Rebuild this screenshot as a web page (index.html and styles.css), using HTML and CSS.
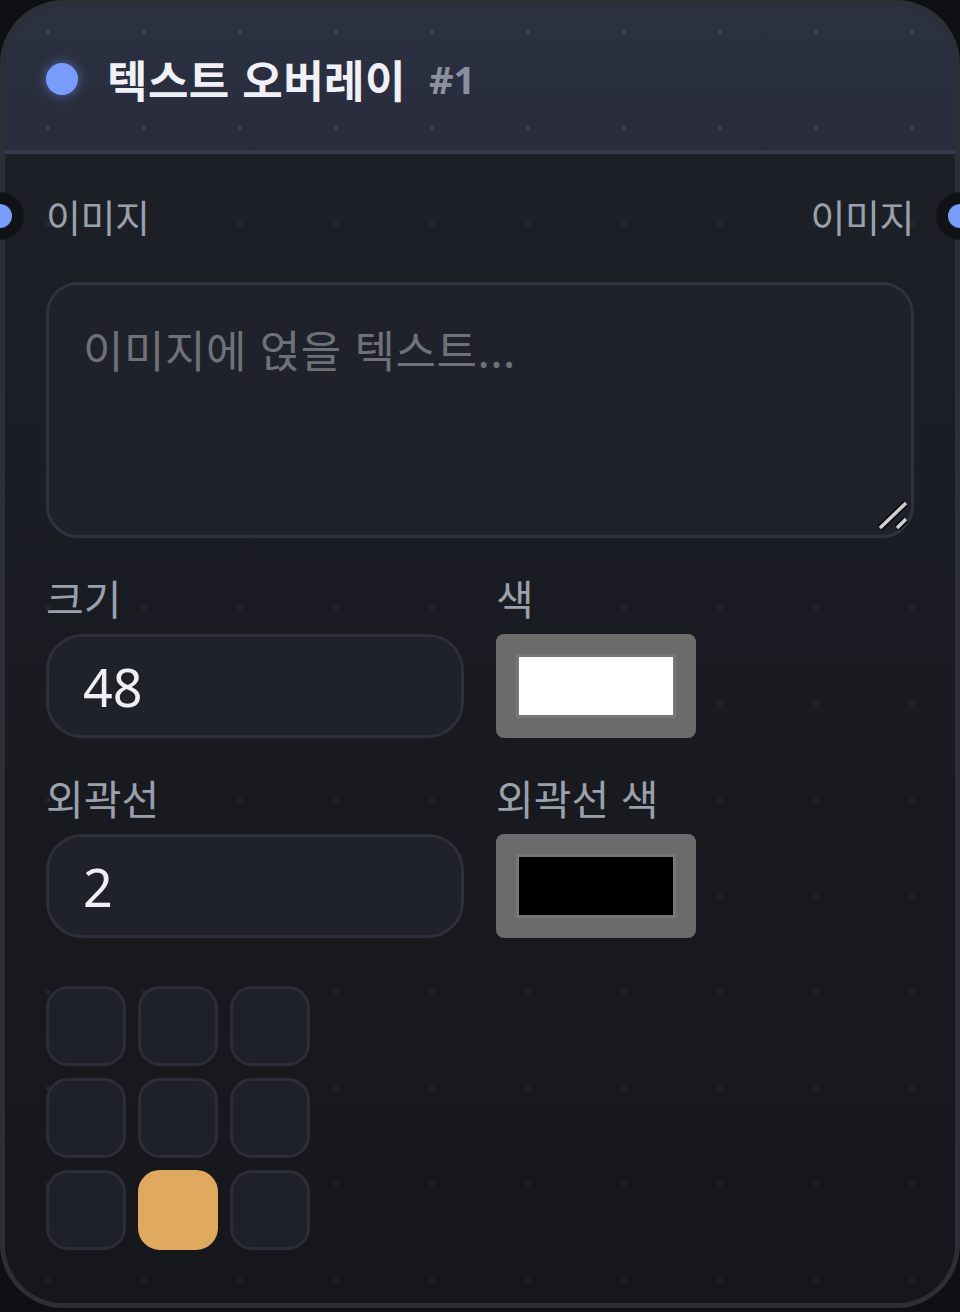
FILE: index.html
```html
<!DOCTYPE html>
<html lang="ko">
<head>
<meta charset="utf-8">
<title>텍스트 오버레이</title>
<link rel="stylesheet" href="styles.css">
</head>
<body>
<div class="node">
  <div class="node-header">
    <span class="status-dot"></span>
    <span class="title">텍스트 오버레이</span>
    <span class="node-id">#1</span>
  </div>
  <div class="node-body">
    <div class="ports">
      <span class="port port-in"><span class="handle handle-left"></span>이미지</span>
      <span class="port port-out">이미지<span class="handle handle-right"></span></span>
    </div>
    <div class="textarea-wrap">
      <textarea class="text-input" placeholder="이미지에 얹을 텍스트..."></textarea>
      <svg class="grip" width="34" height="34" viewBox="0 0 34 34">
        <g stroke-linecap="butt">
          <line x1="4" y1="30" x2="30" y2="5" stroke="#0b0b0d" stroke-width="7"/>
          <line x1="21" y1="30" x2="30" y2="21" stroke="#0b0b0d" stroke-width="7"/>
          <line x1="4" y1="30" x2="30" y2="5" stroke="#cfcfd2" stroke-width="3.5"/>
          <line x1="21" y1="30" x2="30" y2="21" stroke="#cfcfd2" stroke-width="3.5"/>
        </g>
      </svg>
    </div>
    <div class="fields">
      <div class="field">
        <div class="label">크기</div>
        <input class="num-input" type="text" value="48">
      </div>
      <div class="field">
        <div class="label">색</div>
        <div class="swatch"><div class="swatch-color swatch-white"></div></div>
      </div>
      <div class="field">
        <div class="label">외곽선</div>
        <input class="num-input" type="text" value="2">
      </div>
      <div class="field">
        <div class="label">외곽선 색</div>
        <div class="swatch"><div class="swatch-color swatch-black"></div></div>
      </div>
    </div>
    <div class="anchor-grid">
      <div class="cell"></div>
      <div class="cell"></div>
      <div class="cell"></div>
      <div class="cell"></div>
      <div class="cell"></div>
      <div class="cell"></div>
      <div class="cell"></div>
      <div class="cell cell-active"></div>
      <div class="cell"></div>
    </div>
  </div>
</div>
</body>
</html>
```
FILE: styles.css
```css
* {
  box-sizing: border-box;
}

html, body {
  margin: 0;
  padding: 0;
  background: #0f1013;
  font-family: "Noto Sans CJK KR", "Noto Sans", sans-serif;
}

.node {
  width: 960px;
  border: 5px solid #2d2f36;
  border-top-width: 6px;
  border-radius: 64px;
  background: #16181e;
  position: relative;
}

.node-header {
  display: flex;
  align-items: center;
  height: 148px;
  padding: 2px 0 0 41px;
  border-bottom: 4px solid #363b4b;
  border-radius: 58px 58px 0 0;
  background:
    radial-gradient(circle, rgba(255, 255, 255, 0.07) 2px, transparent 2.6px) -5px -22px / 96px 96px,
    linear-gradient(180deg, #2c3142 0%, #282c3b 100%);
}

.status-dot {
  width: 32px;
  height: 32px;
  border-radius: 50%;
  background: #789cfb;
  box-shadow: 0 0 12px rgba(120, 156, 251, 0.55);
  flex: none;
}

.title {
  margin-left: 29px;
  font-size: 44px;
  font-weight: 700;
  color: #eff1f7;
  letter-spacing: 0.4px;
  line-height: 1;
}

.node-id {
  margin-left: 23px;
  font-family: "Noto Sans", "Liberation Sans", sans-serif;
  font-size: 38px;
  font-weight: 700;
  color: #8b909e;
  line-height: 1;
}

.node-body {
  padding: 36px 41px 53px 41px;
  border-radius: 0 0 58px 58px;
  background:
    radial-gradient(circle, rgba(255, 255, 255, 0.05) 2px, transparent 2.6px) -5px 22px / 96px 96px,
    linear-gradient(180deg, #1e2028 0%, #181a20 55%, #15171c 100%);
}

.ports {
  display: flex;
  justify-content: space-between;
  height: 52px;
  align-items: center;
  font-size: 38px;
  color: #9aa0ac;
  letter-spacing: -0.5px;
}

.port {
  position: relative;
  line-height: 52px;
}

.handle {
  position: absolute;
  top: 50%;
  width: 48px;
  height: 48px;
  margin-top: -24px;
  border-radius: 50%;
  background: #789cfb;
  border: 12px solid #111216;
}

.handle-left {
  left: -70px;
}

.handle-right {
  right: -70px;
}

.textarea-wrap {
  position: relative;
  margin-top: 40px;
  height: 256px;
}

.text-input {
  display: block;
  width: 100%;
  height: 100%;
  margin: 0;
  padding: 34px 34px;
  resize: none;
  border: 3px solid #2f3340;
  border-radius: 32px;
  background: #1f222b;
  color: #eef0f4;
  font-family: "Noto Sans CJK KR", "Noto Sans", sans-serif;
  font-size: 44px;
  letter-spacing: 0.5px;
  line-height: 1.4;
  outline: none;
}

.text-input::placeholder {
  color: #6f7178;
}

.grip {
  position: absolute;
  right: 4px;
  bottom: 6px;
}

.fields {
  display: grid;
  grid-template-columns: 418px 418px;
  column-gap: 32px;
  row-gap: 35px;
  margin-top: 35px;
}

.label {
  height: 48px;
  line-height: 48px;
  margin-bottom: 13px;
  font-size: 41px;
  color: #9aa0ac;
  letter-spacing: 0;
}

.num-input {
  display: block;
  width: 100%;
  height: 104px;
  margin: 0;
  padding: 0 34px;
  border: 3px solid #2d303b;
  border-radius: 36px;
  background: #1f222a;
  color: #eef0f4;
  font-family: "Noto Sans", "Noto Sans CJK KR", sans-serif;
  font-size: 52px;
  outline: none;
}

.swatch {
  width: 200px;
  height: 104px;
  padding: 20px;
  border-radius: 8px;
  background: #6b6b6b;
}

.swatch-color {
  width: 100%;
  height: 100%;
  border: 3px solid #777777;
}

.swatch-white {
  background: #ffffff;
}

.swatch-black {
  background: #000000;
}

.anchor-grid {
  display: grid;
  grid-template-columns: repeat(3, 80px);
  grid-auto-rows: 80px;
  gap: 12px;
  margin-top: 48px;
}

.cell {
  border: 3px solid #2b2e38;
  border-radius: 22px;
  background: #1e2129;
}

.cell-active {
  border-color: #dfa95f;
  background: #dfa95f;
}
```
